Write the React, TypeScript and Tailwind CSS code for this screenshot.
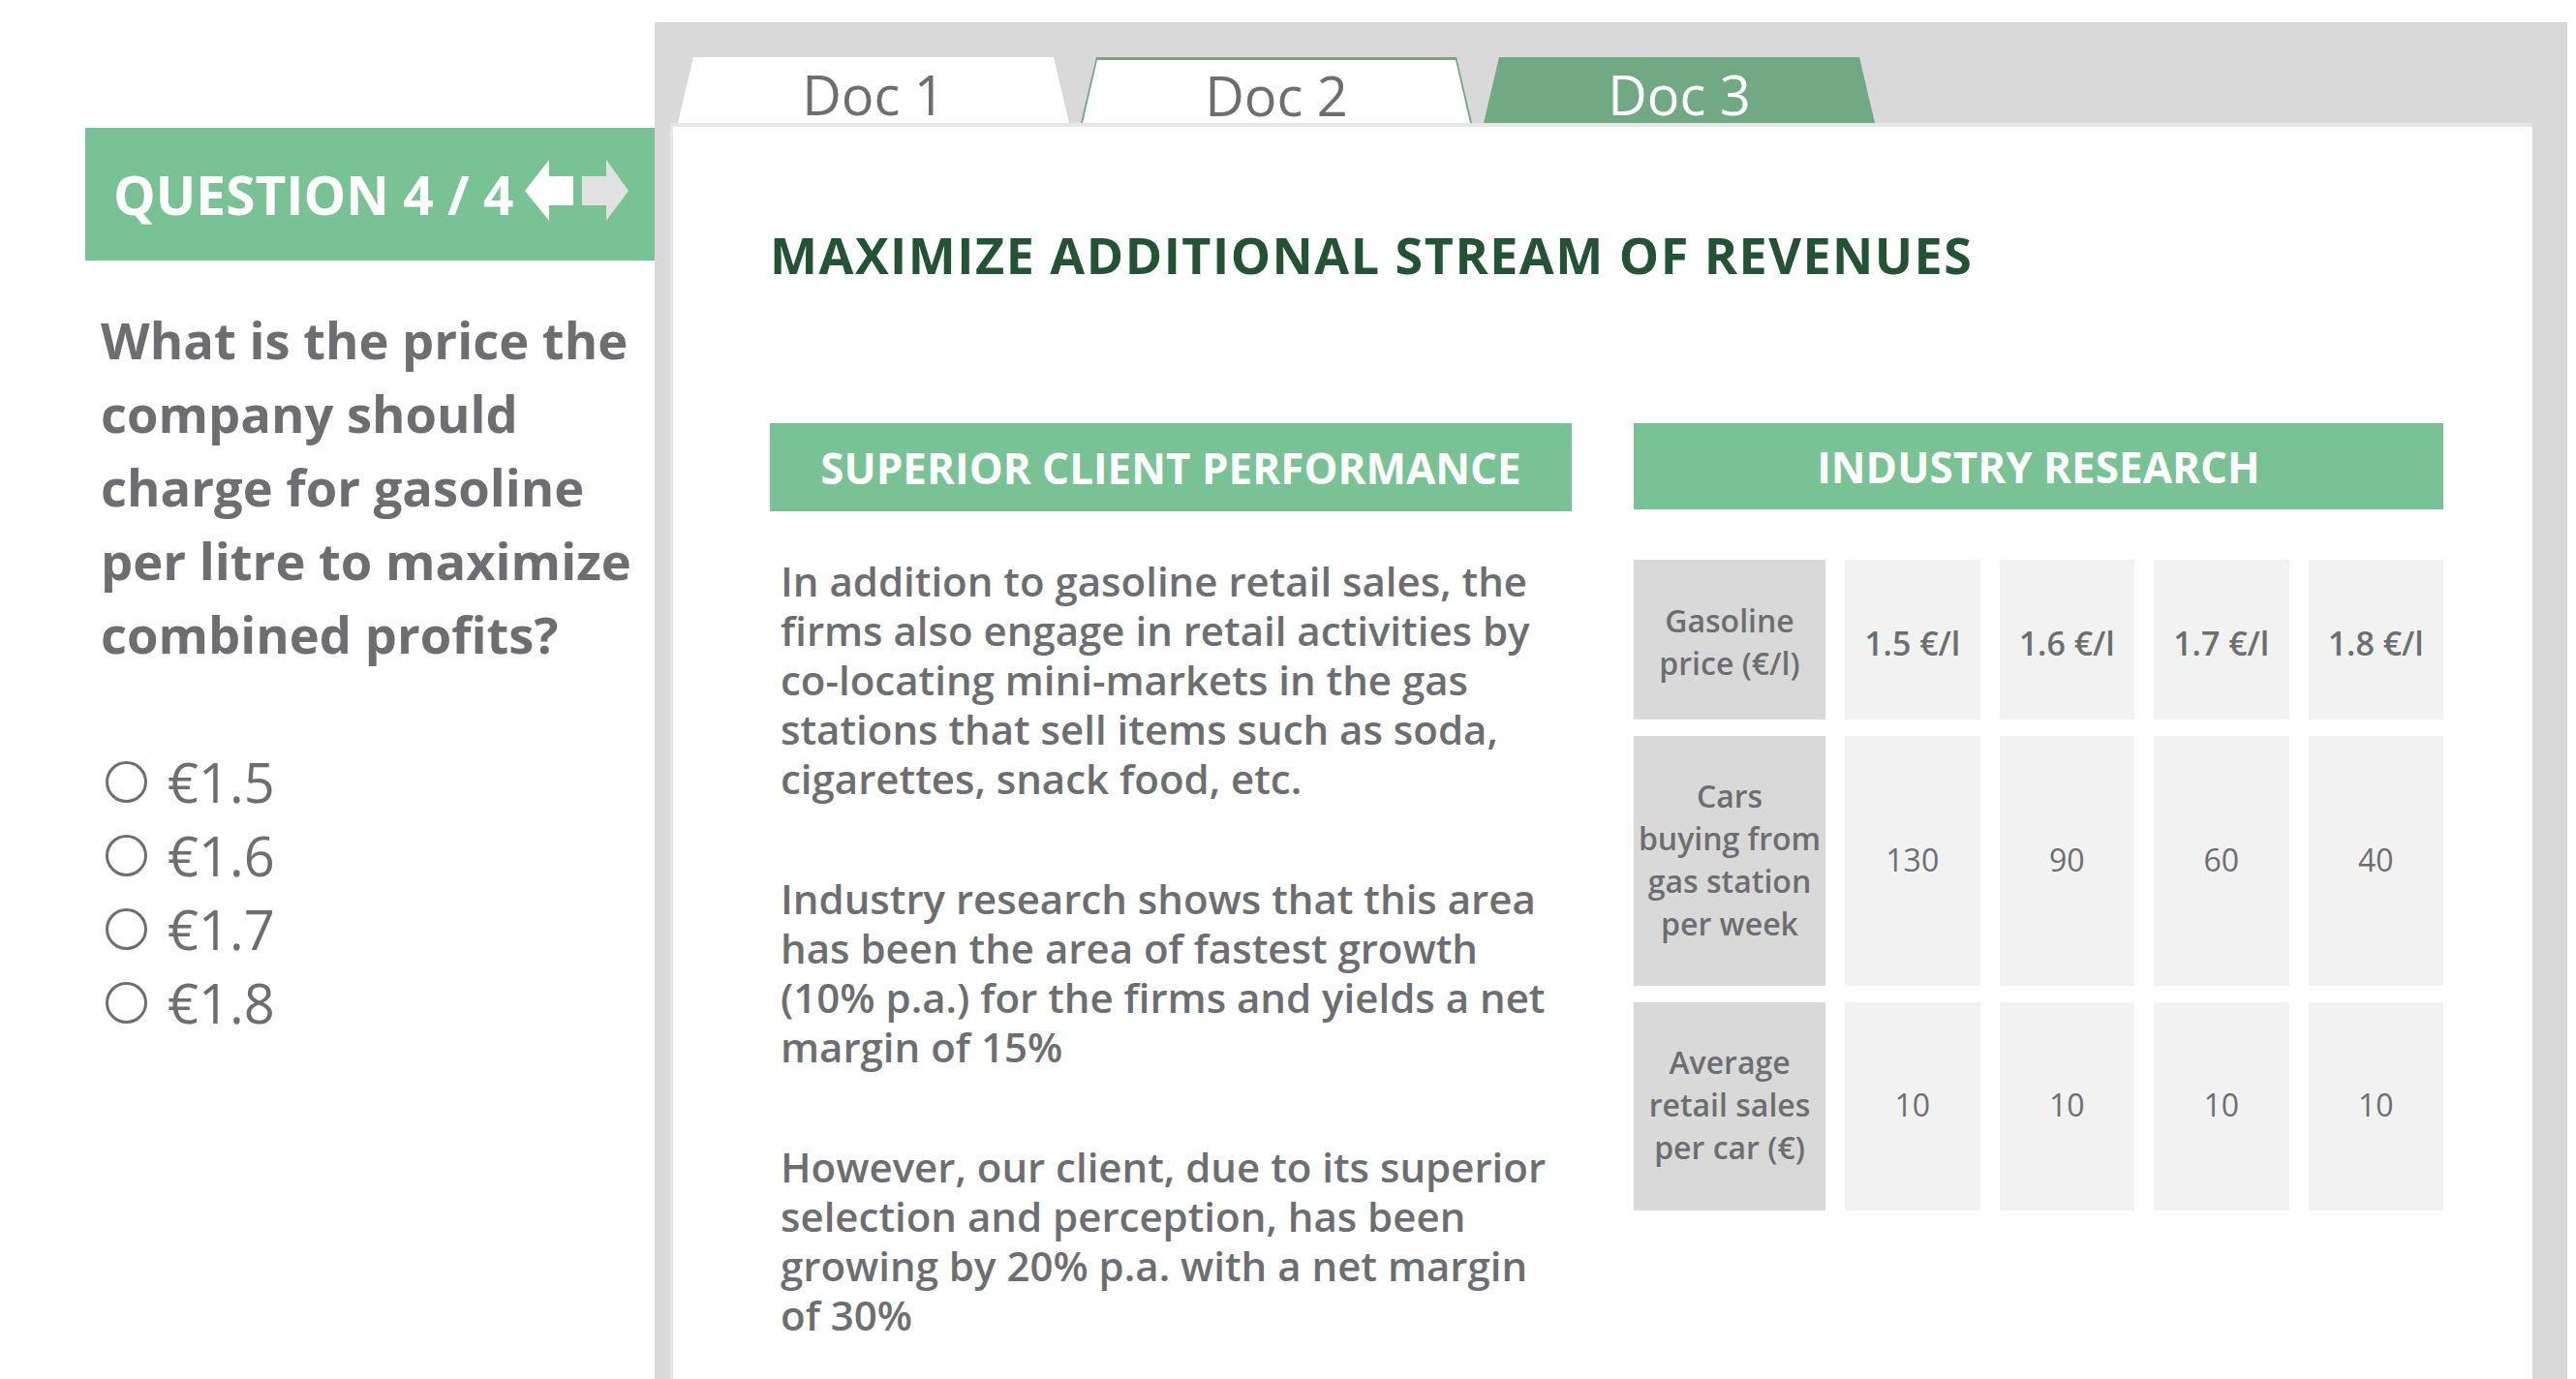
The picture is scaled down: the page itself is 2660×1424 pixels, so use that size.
const font = { fontFamily: '"Open Sans", "Liberation Sans", sans-serif' };

const tabs = [
  { label: "Doc 1", kind: "plain" },
  { label: "Doc 2", kind: "outlined" },
  { label: "Doc 3", kind: "active" },
];

const options = ["€1.5", "€1.6", "€1.7", "€1.8"];

const prices = ["1.5 €/l", "1.6 €/l", "1.7 €/l", "1.8 €/l"];

const rows = [
  { label: ["Cars", "buying from", "gas station", "per week"], values: ["130", "90", "60", "40"], h: "h-[258px]" },
  { label: ["Average", "retail sales", "per car (€)"], values: ["10", "10", "10", "10"], h: "h-[215px]" },
];

const Tab = ({ label, kind }: { label: string; kind: string }) => {
  if (kind === "outlined") {
    return (
      <div className="w-[404px] h-[68px] bg-[#70a983] pt-[3px] px-[2px] [clip-path:polygon(16px_0,388px_0,100%_100%,0_100%)]">
        <div className="h-full bg-white flex items-end justify-center pb-[1px] [clip-path:polygon(15px_0,385px_0,100%_100%,0_100%)]">
          <span className="text-[56px] leading-none text-[#6d6e71]">{label}</span>
        </div>
      </div>
    );
  }
  return (
    <div
      className={`w-[404px] h-[68px] flex items-end justify-center pb-[2px] [clip-path:polygon(16px_0,388px_0,100%_100%,0_100%)] ${
        kind === "active" ? "bg-[#70a983]" : "bg-white"
      }`}
    >
      <span className={`text-[56px] leading-none ${kind === "active" ? "text-white" : "text-[#6d6e71]"}`}>{label}</span>
    </div>
  );
};

const Arrows = () => (
  <svg width="107" height="63" viewBox="0 0 107 63" className="ml-[12px] -mt-[8px] shrink-0">
    <polygon points="0,32 25,0 25,17 50,17 50,47 25,47 25,63" fill="#ffffff" />
    <polygon points="59,17 84,17 84,0 107,32 84,63 84,47 59,47" fill="#e1e1e1" />
  </svg>
);

export default function App() {
  return (
    <div className="flex w-[2660px] h-[1424px] bg-white overflow-hidden text-[#6d6e71]" style={font}>
      {/* Question column */}
      <aside className="w-[676px] shrink-0 pt-[132px] pl-[88px]">
        <div className="h-[137px] bg-[#79c295] flex items-center pl-[29px]">
          <span className="text-white text-[55px] font-bold leading-none">QUESTION 4 / 4</span>
          <Arrows />
        </div>

        <p className="mt-[44px] pl-[16px] text-[52.5px] font-bold leading-[76px]">
          What is the price the
          <br />
          company should
          <br />
          charge for gasoline
          <br />
          per litre to maximize
          <br />
          combined profits?
        </p>

        <ul className="mt-[76px] pl-[21px]">
          {options.map((opt) => (
            <li key={opt} className="flex items-center h-[76px]">
              <span className="w-[43px] h-[43px] rounded-full border-[3.5px] border-[#6d6e71] shrink-0" />
              <span className="ml-[21px] text-[56px] leading-none">{opt}</span>
            </li>
          ))}
        </ul>
      </aside>

      {/* Document panel */}
      <section className="flex-1 mt-[23px] mr-[9px] bg-[#d9d9d9] flex flex-col">
        <div className="flex gap-[12px] pt-[36px] pl-[24px]">
          {tabs.map((t) => (
            <Tab key={t.label} label={t.label} kind={t.kind} />
          ))}
        </div>

        <div className="flex-1 ml-[16px] mr-[36px] bg-white border-t-4 border-l-[3px] border-[#e6e6e6] pl-[100px] pr-[92px] pt-[106px]">
          <h1 className="text-[52px] font-bold leading-none text-[#245234] tracking-[1.5px]">
            MAXIMIZE ADDITIONAL STREAM OF REVENUES
          </h1>

          <div className="flex gap-[64px] mt-[148px]">
            {/* Left: client performance */}
            <div className="w-[828px] shrink-0">
              <div className="h-[91px] bg-[#79c295] flex items-center justify-center">
                <span className="text-white text-[44px] font-bold leading-none">SUPERIOR CLIENT PERFORMANCE</span>
              </div>
              <div className="pl-[11px] mt-[46px] text-[42px] font-semibold leading-[51px]">
                <p>
                  In addition to gasoline retail sales, the
                  <br />
                  firms also engage in retail activities by
                  <br />
                  co-locating mini-markets in the gas
                  <br />
                  stations that sell items such as soda,
                  <br />
                  cigarettes, snack food, etc.
                </p>
                <p className="mt-[73px]">
                  Industry research shows that this area
                  <br />
                  has been the area of fastest growth
                  <br />
                  (10% p.a.) for the firms and yields a net
                  <br />
                  margin of 15%
                </p>
                <p className="mt-[73px]">
                  However, our client, due to its superior
                  <br />
                  selection and perception, has been
                  <br />
                  growing by 20% p.a. with a net margin
                  <br />
                  of 30%
                </p>
              </div>
            </div>

            {/* Right: industry research */}
            <div className="flex-1">
              <div className="h-[89px] bg-[#79c295] flex items-center justify-center">
                <span className="text-white text-[44px] font-bold leading-none">INDUSTRY RESEARCH</span>
              </div>

              <div className="mt-[52px] grid grid-cols-[198px_repeat(4,1fr)] gap-x-[20px] gap-y-[17px] text-[32px] leading-[44px] text-center">
                <div className="h-[165px] bg-[#d9d9d9] flex items-center justify-center font-semibold">
                  <span className="mt-[4px]">
                    Gasoline
                    <br />
                    price (€/l)
                  </span>
                </div>
                {prices.map((p) => (
                  <div key={p} className="h-[165px] bg-[#f2f2f2] flex items-center justify-center font-semibold text-[34px] pt-[6px]">
                    {p}
                  </div>
                ))}

                {rows.map((r) => (
                  <>
                    <div key={r.label[0]} className={`${r.h} bg-[#d9d9d9] flex items-center justify-center font-semibold`}>
                      <span className="-mt-[3px]">
                        {r.label.map((l, i) => (
                          <span key={i} className="block">
                            {l}
                          </span>
                        ))}
                      </span>
                    </div>
                    {r.values.map((v, i) => (
                      <div key={r.label[0] + i} className={`${r.h} bg-[#f2f2f2] flex items-center justify-center pb-[3px]`}>
                        {v}
                      </div>
                    ))}
                  </>
                ))}
              </div>
            </div>
          </div>
        </div>
      </section>
    </div>
  );
}
